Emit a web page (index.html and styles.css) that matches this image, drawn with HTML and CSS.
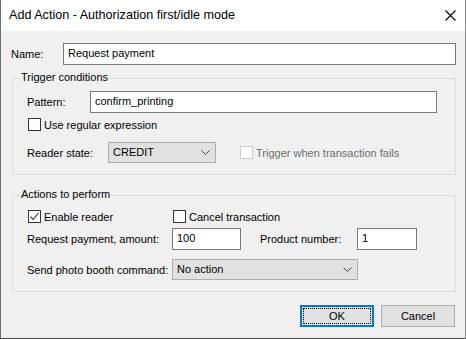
FILE: index.html
```html
<!DOCTYPE html>
<html>
<head>
<meta charset="utf-8">
<link rel="stylesheet" href="styles.css">
</head>
<body>
<div class="window">
  <div class="titlebar">
    <span class="title">Add Action - Authorization first/idle mode</span>
    <svg class="close" width="11" height="11" viewBox="0 0 11 11"><path d="M0.5 0.5 L10.5 10.5 M10.5 0.5 L0.5 10.5" stroke="#000" stroke-width="1.1" fill="none"/></svg>
  </div>
  <div class="content">
    <div class="row name-row">
      <span class="name-label">Name:</span>
      <div class="input name-input">Request payment</div>
    </div>

    <div class="group trigger">
      <span class="legend">Trigger conditions</span>
      <div class="row r-pattern">
        <span class="pattern-label">Pattern:</span>
        <div class="input pattern-input">confirm_printing</div>
      </div>
      <div class="row r-check">
        <label class="check"><span class="box"></span>Use regular expression</label>
      </div>
      <div class="row r-select">
        <span class="reader-label">Reader state:</span>
        <div class="select reader-select">CREDIT<svg class="chev" width="9" height="5" viewBox="0 0 9 5"><path d="M0.5 0.5 L4.5 4.5 L8.5 0.5" stroke="#444" fill="none"/></svg></div>
        <label class="check disabled fail-check"><span class="box"></span>Trigger when transaction fails</label>
      </div>
    </div>

    <div class="group actions">
      <span class="legend">Actions to perform</span>
      <div class="row r-check2">
        <label class="check enable"><span class="box"><svg width="11" height="11" viewBox="0 0 11 11"><path d="M1.5 5.5 L4 8.5 L9.5 2" stroke="#222" stroke-width="1.1" fill="none"/></svg></span>Enable reader</label>
        <label class="check cancel-check"><span class="box"></span>Cancel transaction</label>
      </div>
      <div class="row r-amount">
        <span class="amount-label">Request payment, amount:</span>
        <div class="input amount-input">100</div>
        <span class="product-label">Product number:</span>
        <div class="input product-input">1</div>
      </div>
      <div class="row r-send">
        <span class="send-label">Send photo booth command:</span>
        <div class="select send-select">No action<svg class="chev" width="9" height="5" viewBox="0 0 9 5"><path d="M0.5 0.5 L4.5 4.5 L8.5 0.5" stroke="#444" fill="none"/></svg></div>
      </div>
    </div>

    <div class="buttons">
      <div class="btn ok"><span class="focus">OK</span></div>
      <div class="btn cancel">Cancel</div>
    </div>
  </div>
</div>
</body>
</html>
```

FILE: styles.css
```css
* { box-sizing: border-box; }
html, body { margin: 0; padding: 0; background: #f0f0f0; }
body {
  font-family: "Liberation Sans", Arial, sans-serif;
  font-size: 11px;
  color: #000;
  white-space: nowrap;
}
.window {
  width: 466px;
  height: 339px;
  background: #f0f0f0;
  border-left: 1px solid #6e6e6e;
  border-right: 1px solid #8a8a8a;
  border-bottom: 1px solid #4a4a4a;
  overflow: hidden;
}
.titlebar {
  height: 31px;
  background: #fff;
  display: flex;
  align-items: center;
  padding-left: 8px;
  padding-right: 9px;
}
.title { flex: 1; font-size: 12.6px; padding-bottom: 1px; }
.close { display: block; margin-top: -1px; }
.content { padding: 12px 9px 0 10px; }
.row { display: flex; align-items: center; }
.name-row { height: 22px; }
.name-label { width: 52px; }
.input {
  height: 100%;
  border: 1px solid #7a7a7a;
  background: #fff;
  padding: 0 0 0 4px;
  display: flex;
  align-items: center;
  padding-bottom: 2px;
}
.name-input { flex: 1; }

.group {
  position: relative;
  border: 1px solid #dcdcdc;
  margin-left: 1px;
  padding-left: 14px;
}
.legend {
  position: absolute;
  top: -8px;
  left: 7px;
  padding: 0 1px;
  background: #f0f0f0;
}
.trigger { margin-top: 13px; padding-top: 12px; padding-bottom: 11px; }
.r-pattern { height: 22px; }
.pattern-label { width: 63px; }
.pattern-input { width: 347px; }
.r-check { height: 13px; margin-top: 5px; }
.r-select { height: 21px; margin-top: 11px; }
.reader-label { width: 81px; }

.check { display: flex; align-items: center; margin-left: 1px; }
.box {
  width: 13px;
  height: 13px;
  border: 1px solid #333;
  background: #fff;
  margin-right: 3px;
  display: flex;
  align-items: center;
  justify-content: center;
}
.box svg { display: block; }
.disabled { color: #6d6d6d; }
.disabled .box { border-color: #cccccc; }
.fail-check { margin-left: 24px; }

.select {
  height: 100%;
  border: 1px solid #adadad;
  background: #e1e1e1;
  display: flex;
  align-items: center;
  justify-content: space-between;
  padding: 0 5px 1px 4px;
}
.select .chev { display: block; margin-top: 1px; }
.reader-select { width: 108px; }

.actions { margin-top: 20px; padding-top: 14px; padding-bottom: 11px; }
.r-check2 { height: 13px; }
.enable { width: 144px; }
.r-amount { height: 22px; margin-top: 5px; }
.amount-label { width: 145px; }
.amount-input { width: 69px; }
.product-label { margin-left: 19px; width: 97px; }
.product-input { width: 60px; }
.r-send { height: 21px; margin-top: 9px; }
.send-label { width: 145px; }
.send-select { width: 186px; }

.buttons {
  display: flex;
  justify-content: flex-end;
  gap: 7px;
  margin-top: 13px;
  padding-right: 1px;
}
.btn {
  width: 74px;
  height: 22px;
  background: #e1e1e1;
  border: 1px solid #adadad;
  display: flex;
  align-items: center;
  justify-content: center;
}
.ok { border: 2px solid #0078d7; padding: 1px; }
.focus {
  width: 100%;
  height: 100%;
  border: 1px dotted #000;
  display: flex;
  align-items: center;
  justify-content: center;
}
```
